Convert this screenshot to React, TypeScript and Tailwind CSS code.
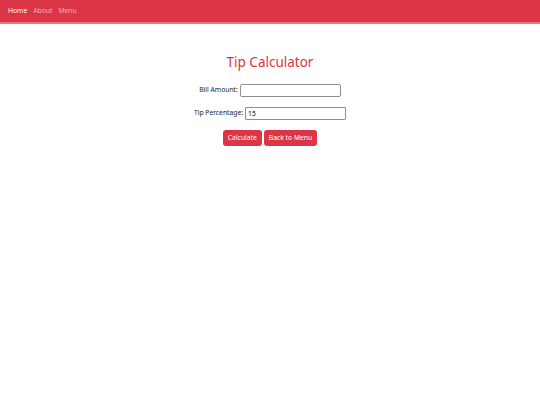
import React, { useState } from "react";

function Navbar() {
  return (
    <nav className="h-[24px] bg-[#dc3545] border-b-2 border-[#ec7580] flex items-center px-2 gap-[6px] text-[6.75px]">
      <a className="text-white">Home</a>
      <a className="text-white/55">About</a>
      <a className="text-white/55">Menu</a>
    </nav>
  );
}

export default function App() {
  const [bill, setBill] = useState("");
  const [tip, setTip] = useState("15");

  return (
    <div className="min-h-screen bg-white font-['Noto_Sans',sans-serif] text-[#212529]">
      <Navbar />
      <main className="flex flex-col items-center pt-[28px]">
        <h1 className="text-[13.5px] leading-[20px] text-[#dc3545] mb-[12px]">Tip Calculator</h1>
        <div className="flex items-center gap-[2px] text-[6.75px] mb-[10px]">
          <label>Bill Amount:</label>
          <input
            value={bill}
            onChange={(e) => setBill(e.target.value)}
            className="w-[101px] h-[13px] border border-[#8f8f8f] rounded-[2px] px-[2px] text-[6.75px] outline-none"
          />
        </div>
        <div className="flex items-center gap-[2px] text-[6.75px] mb-[10px]">
          <label>Tip Percentage:</label>
          <input
            value={tip}
            onChange={(e) => setTip(e.target.value)}
            className="w-[101px] h-[13px] border border-[#8f8f8f] rounded-[1px] px-[2px] text-[6.75px] text-black outline-none"
          />
        </div>
        <div className="flex gap-[2px]">
          <button className="h-[16px] px-[5px] bg-[#dc3545] text-white text-[6.75px] rounded-[3px]">Calculate</button>
          <button className="h-[16px] px-[5px] bg-[#dc3545] text-white text-[6.75px] rounded-[3px]">Back to Menu</button>
        </div>
      </main>
    </div>
  );
}
